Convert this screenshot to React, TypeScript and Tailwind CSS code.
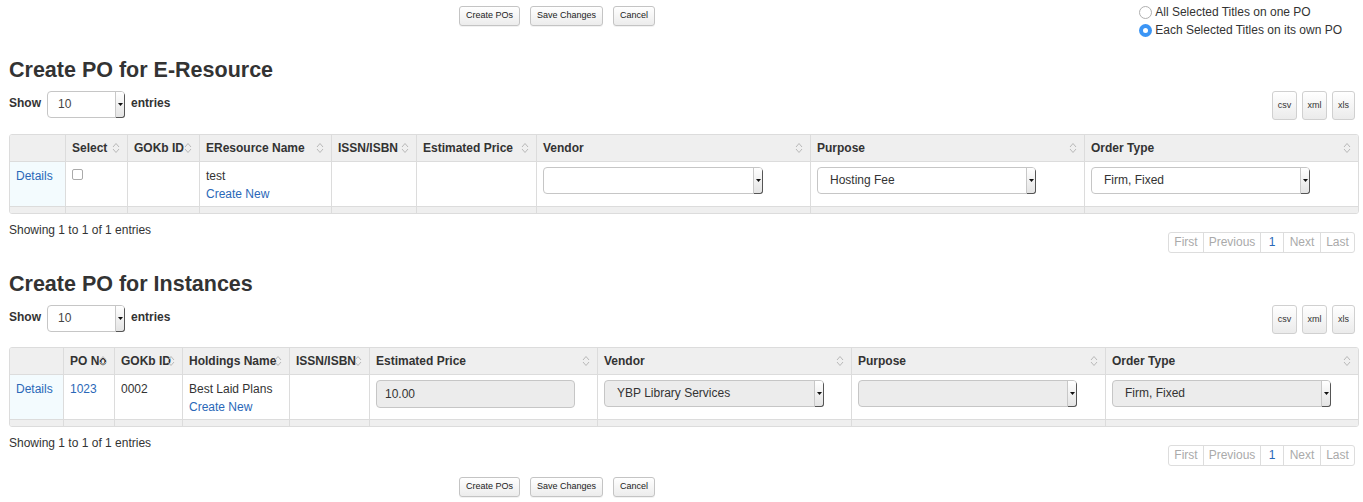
import React from 'react';

const font = { fontFamily: '"Liberation Sans", Arial, sans-serif' };

const SortIcon: React.FC = () => (
  <svg
    width="8"
    height="12"
    viewBox="0 0 8 12"
    fill="none"
    stroke="#b8b8b8"
    strokeWidth="1"
    className="absolute right-[7px] top-1/2 -translate-y-1/2"
  >
    <path d="M1 5 L4 1.5 L7 5" />
    <path d="M1 7 L4 10.5 L7 7" />
  </svg>
);

const Btn: React.FC<{ label: string }> = ({ label }) => (
  <button className="h-[20px] rounded-[3px] border border-[#c4c4c4] bg-gradient-to-b from-white to-[#ececec] px-[6px] text-[9px] text-[#222] shadow-[0_1px_0_rgba(0,0,0,0.05)]">
    {label}
  </button>
);

const SmallBtn: React.FC<{ label: string; w: string }> = ({ label, w }) => (
  <button className={`h-[29px] ${w} rounded-[3px] border border-[#d0d0d0] bg-gradient-to-b from-white to-[#ebebeb] text-[9px] text-[#333]`}>
    {label}
  </button>
);

const Arrow: React.FC = () => (
  <span className="flex w-[9px] items-center justify-center rounded-r-[3px] border-l border-[#c8c8c8] bg-gradient-to-b from-white to-[#e4e4e4] shadow-[1px_1px_0_#555]">
    <svg width="5" height="3" viewBox="0 0 5 3">
      <path d="M0 0 L5 0 L2.5 3 Z" fill="#111" />
    </svg>
  </span>
);

const Select: React.FC<{ value?: string; w: string; gray?: boolean }> = ({ value, w, gray }) => (
  <div
    className={`flex h-[27px] ${w} rounded-[4px] border border-[#c6c6c6] ${gray ? 'bg-[#ececec]' : 'bg-white'} text-[12px] text-[#333]`}
  >
    <span className="flex-1 pl-[12px] leading-[25px]">{value}</span>
    <Arrow />
  </div>
);

type Col = { label: string; w: string };

const Th: React.FC<Col> = ({ label, w }) => (
  <th className={`${w} relative h-[26px] overflow-hidden whitespace-nowrap border-l border-[#dcdcdc] bg-[#efefef] pl-[6px] text-left text-[12px] font-bold text-[#333] first:border-l-0`}>
    {label}
    {label && <SortIcon />}
  </th>
);

const Pager: React.FC = () => (
  <div className="flex h-[21px] overflow-hidden rounded-[3px] border border-[#ddd] text-center text-[12px] leading-[19px] text-[#aaa]">
    <span className="w-[34px]">First</span>
    <span className="w-[57px] border-l border-[#ddd]">Previous</span>
    <span className="w-[23px] border-l border-[#ddd] text-[#2a68b8]">1</span>
    <span className="w-[37px] border-l border-[#ddd]">Next</span>
    <span className="w-[34px] border-l border-[#ddd]">Last</span>
  </div>
);

const ShowRow: React.FC = () => (
  <div className="flex items-start justify-between">
    <div className="flex items-center gap-[6px] pt-[1px] text-[12px] font-bold text-[#333]">
      <span className="pb-[3px]">Show</span>
      <div className="flex h-[27px] w-[78px] rounded-[4px] border border-[#c6c6c6] bg-white font-normal">
        <span className="flex-1 pl-[10px] leading-[25px] text-[#444]">10</span>
        <Arrow />
      </div>
      <span className="pb-[3px]">entries</span>
    </div>
    <div className="mr-[-1px] flex gap-[5px] pt-[1px]">
      <SmallBtn label="csv" w="w-[25px]" />
      <SmallBtn label="xml" w="w-[25px]" />
      <SmallBtn label="xls" w="w-[23px]" />
    </div>
  </div>
);

const link = 'text-[#2a68b8]';
const dark = 'text-[#333]';

const Footer: React.FC<{ widths: string[] }> = ({ widths }) => (
  <tr>
    {widths.map((w, i) => (
      <td key={i} className={`${w} h-[7px] border-t border-l border-[#dcdcdc] bg-[#efefef] first:border-l-0`} />
    ))}
  </tr>
);

const Info: React.FC = () => (
  <div className="flex items-start justify-between">
    <span className="mt-[7px] text-[12px] text-[#333]">Showing 1 to 1 of 1 entries</span>
    <div className="mr-[-1px] mt-[18px]">
      <Pager />
    </div>
  </div>
);

export default function App() {
  const cols1: Col[] = [
    { label: '', w: 'w-[55px]' },
    { label: 'Select', w: 'w-[62px]' },
    { label: 'GOKb ID', w: 'w-[72px]' },
    { label: 'EResource Name', w: 'w-[132px]' },
    { label: 'ISSN/ISBN', w: 'w-[85px]' },
    { label: 'Estimated Price', w: 'w-[120px]' },
    { label: 'Vendor', w: 'w-[274px]' },
    { label: 'Purpose', w: 'w-[274px]' },
    { label: 'Order Type', w: 'w-[274px]' },
  ];
  const cols2: Col[] = [
    { label: '', w: 'w-[53px]' },
    { label: 'PO No', w: 'w-[51px]' },
    { label: 'GOKb ID', w: 'w-[68px]' },
    { label: 'Holdings Name', w: 'w-[107px]' },
    { label: 'ISSN/ISBN', w: 'w-[80px]' },
    { label: 'Estimated Price', w: 'w-[228px]' },
    { label: 'Vendor', w: 'w-[254px]' },
    { label: 'Purpose', w: 'w-[254px]' },
    { label: 'Order Type', w: 'w-[253px]' },
  ];
  const td = 'border-l border-t border-[#dcdcdc] align-top h-[45px] pl-[6px] pt-[5px] text-[12px] leading-[18px]';

  return (
    <div style={font} className="h-[502px] w-[1363px] overflow-hidden bg-white text-[#333]">
      {/* top bar */}
      <div className="flex h-[57px] justify-between">
        <div className="ml-[459px] mt-[6px] flex h-[20px] gap-[10px]">
          <Btn label="Create POs" />
          <Btn label="Save Changes" />
          <Btn label="Cancel" />
        </div>
        <div className="mr-[21px] mt-[5px] flex flex-col gap-[3px] text-[12px] text-[#333]">
          <label className="flex items-center gap-[3px] leading-[15px]">
            <span className="h-[13px] w-[13px] rounded-full border border-[#b0b0b0] bg-white" />
            All Selected Titles on one PO
          </label>
          <label className="flex items-center gap-[3px] leading-[15px]">
            <span className="flex h-[13px] w-[13px] items-center justify-center rounded-full bg-[#3b95f5]">
              <span className="h-[5px] w-[5px] rounded-full bg-white" />
            </span>
            Each Selected Titles on its own PO
          </label>
        </div>
      </div>

      <div className="px-[9px]">
        <h2 className="text-[21.5px] font-bold leading-[26px] text-[#333]">Create PO for E-Resource</h2>
        <div className="mt-[7px]">
          <ShowRow />
        </div>

        <table className="mt-[14px] w-[1348px] table-fixed border-separate border-spacing-0 overflow-hidden rounded-[3px] border border-[#dcdcdc]">
          <thead>
            <tr>
              {cols1.map((c, i) => (
                <Th key={i} {...c} />
              ))}
            </tr>
          </thead>
          <tbody>
            <tr>
              <td className={`${td} border-l-0 bg-[#f3fbfe] ${link}`}>Details</td>
              <td className={`${td} ${dark}`}>
                <span className="mt-[2px] block h-[11px] w-[11px] rounded-[2px] border border-[#aaa] bg-white" />
              </td>
              <td className={td} />
              <td className={`${td} ${dark}`}>
                test
                <br />
                <span className={link}>Create New</span>
              </td>
              <td className={td} />
              <td className={td} />
              <td className={`${td} pt-[4px]`}>
                <Select w="w-[220px]" />
              </td>
              <td className={`${td} pt-[4px]`}>
                <Select w="w-[219px]" value="Hosting Fee" />
              </td>
              <td className={`${td} pt-[4px]`}>
                <Select w="w-[219px]" value="Firm, Fixed" />
              </td>
            </tr>
            <Footer widths={cols1.map((c) => c.w)} />
          </tbody>
        </table>

        <Info />

        <h2 className="mt-[18px] text-[21.5px] font-bold leading-[26px] text-[#333]">Create PO for Instances</h2>
        <div className="mt-[7px]">
          <ShowRow />
        </div>

        <table className="mt-[13px] w-[1348px] table-fixed border-separate border-spacing-0 overflow-hidden rounded-[3px] border border-[#dcdcdc]">
          <thead>
            <tr>
              {cols2.map((c, i) => (
                <Th key={i} {...c} />
              ))}
            </tr>
          </thead>
          <tbody>
            <tr>
              <td className={`${td} border-l-0 bg-[#f3fbfe] ${link}`}>Details</td>
              <td className={`${td} ${link}`}>1023</td>
              <td className={`${td} ${dark}`}>0002</td>
              <td className={`${td} ${dark}`}>
                Best Laid Plans
                <br />
                <span className={link}>Create New</span>
              </td>
              <td className={td} />
              <td className={`${td} pt-[4px]`}>
                <div className="h-[28px] w-[199px] rounded-[4px] border border-[#c6c6c6] bg-[#ececec] pl-[8px] text-[12px] leading-[26px] text-[#333]">
                  10.00
                </div>
              </td>
              <td className={`${td} pt-[4px]`}>
                <Select w="w-[220px]" gray value="YBP Library Services" />
              </td>
              <td className={`${td} pt-[4px]`}>
                <Select w="w-[219px]" gray />
              </td>
              <td className={`${td} pt-[4px]`}>
                <Select w="w-[219px]" gray value="Firm, Fixed" />
              </td>
            </tr>
            <Footer widths={cols2.map((c) => c.w)} />
          </tbody>
        </table>

        <Info />
      </div>

      <div className="ml-[459px] mt-[11px] flex gap-[10px]">
        <Btn label="Create POs" />
        <Btn label="Save Changes" />
        <Btn label="Cancel" />
      </div>
    </div>
  );
}
